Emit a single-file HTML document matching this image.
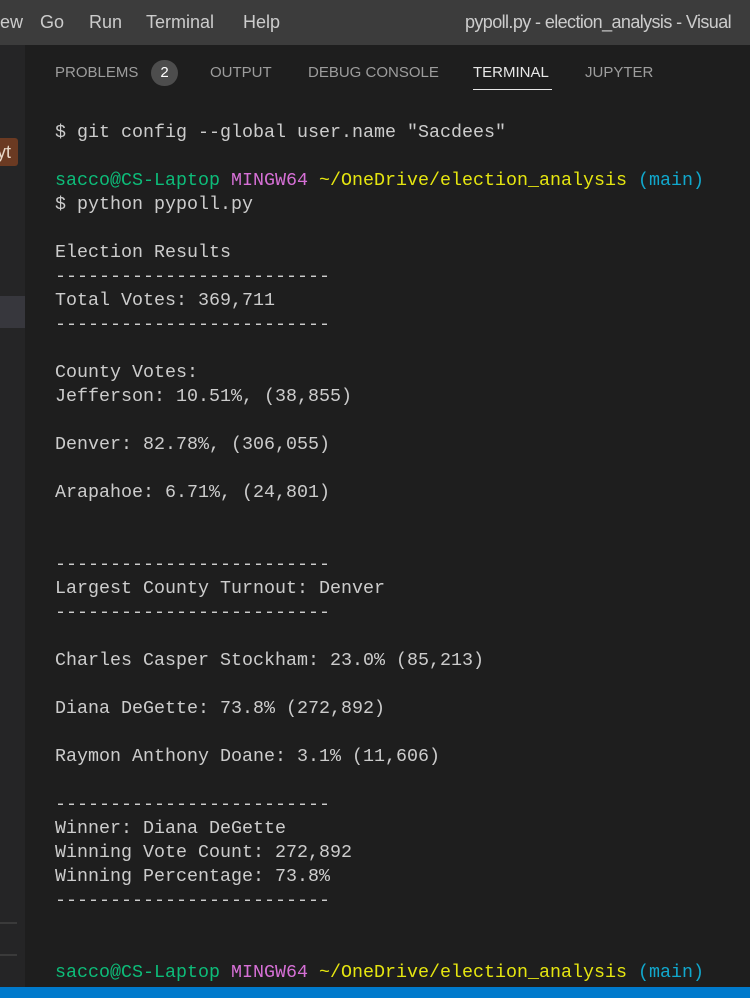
<!DOCTYPE html>
<html><head><meta charset="utf-8"><style>
html,body{margin:0;padding:0;width:750px;height:998px;overflow:hidden;background:#1e1e1e}
#title{position:absolute;left:0;top:0;width:750px;height:45px;background:#3c3c3c;font-family:"Liberation Sans",sans-serif;font-size:18px;color:#cccccc;overflow:hidden}
#title span{position:absolute;top:12px;white-space:nowrap}
#side{position:absolute;left:0;top:45px;width:25px;height:942px;background:#252526}
#tabs{position:absolute;top:64px;font-family:"Liberation Sans",sans-serif;font-size:15px;color:#9d9d9d}
#tabs span{position:absolute;white-space:nowrap}
#term{position:absolute;left:55px;top:121px;margin:0;font-family:"Liberation Mono",monospace;font-size:18.33px;line-height:24px;color:#cccccc;white-space:pre}
.g{color:#0dbc79}.m{color:#d670d6}.y{color:#e5e510}.c{color:#11a8cd}
#status{position:absolute;left:0;top:987px;width:750px;height:11px;background:#007acc}
</style></head><body>
<div id="title"><span style="left:0">ew</span><span style="left:40px">Go</span><span style="left:89px">Run</span><span style="left:146px">Terminal</span><span style="left:243px">Help</span><span style="left:465px;letter-spacing:-0.6px">pypoll.py - election_analysis - Visual</span></div>
<div id="side">
<div style="position:absolute;left:0;top:93px;width:18px;height:28px;background:#6b3a22;border-radius:0 3px 3px 0;color:#e8d8c8;font-family:'Liberation Sans',sans-serif;font-size:18px;line-height:28px;overflow:hidden"><span style="margin-left:-3px">yt</span></div>
<div style="position:absolute;left:0;top:251px;width:25px;height:32px;background:#37373d"></div>
<div style="position:absolute;left:0;top:877px;width:17px;height:2px;background:#3a3a3a"></div>
<div style="position:absolute;left:0;top:909px;width:17px;height:2px;background:#3a3a3a"></div>
</div>
<div id="tabs">
<span style="left:55px">PROBLEMS</span>
<span style="left:151px;top:-4px;width:27px;height:26px;border-radius:13px;background:#4d4d4d;color:#fff;text-align:center;line-height:26px">2</span>
<span style="left:210px">OUTPUT</span>
<span style="left:308px">DEBUG CONSOLE</span>
<span style="left:473px;color:#e7e7e7">TERMINAL</span>
<span style="left:473px;top:25px;width:79px;height:1px;background:#e7e7e7"></span>
<span style="left:585px">JUPYTER</span>
</div>
<pre id="term">$ git config --global user.name "Sacdees"

<span class="g">sacco@CS-Laptop</span> <span class="m">MINGW64</span> <span class="y">~/OneDrive/election_analysis</span> <span class="c">(main)</span>
$ python pypoll.py

Election Results
-------------------------
Total Votes: 369,711
-------------------------

County Votes:
Jefferson: 10.51%, (38,855)

Denver: 82.78%, (306,055)

Arapahoe: 6.71%, (24,801)


-------------------------
Largest County Turnout: Denver
-------------------------

Charles Casper Stockham: 23.0% (85,213)

Diana DeGette: 73.8% (272,892)

Raymon Anthony Doane: 3.1% (11,606)

-------------------------
Winner: Diana DeGette
Winning Vote Count: 272,892
Winning Percentage: 73.8%
-------------------------


<span class="g">sacco@CS-Laptop</span> <span class="m">MINGW64</span> <span class="y">~/OneDrive/election_analysis</span> <span class="c">(main)</span></pre>
<div id="status"></div>
</body></html>
